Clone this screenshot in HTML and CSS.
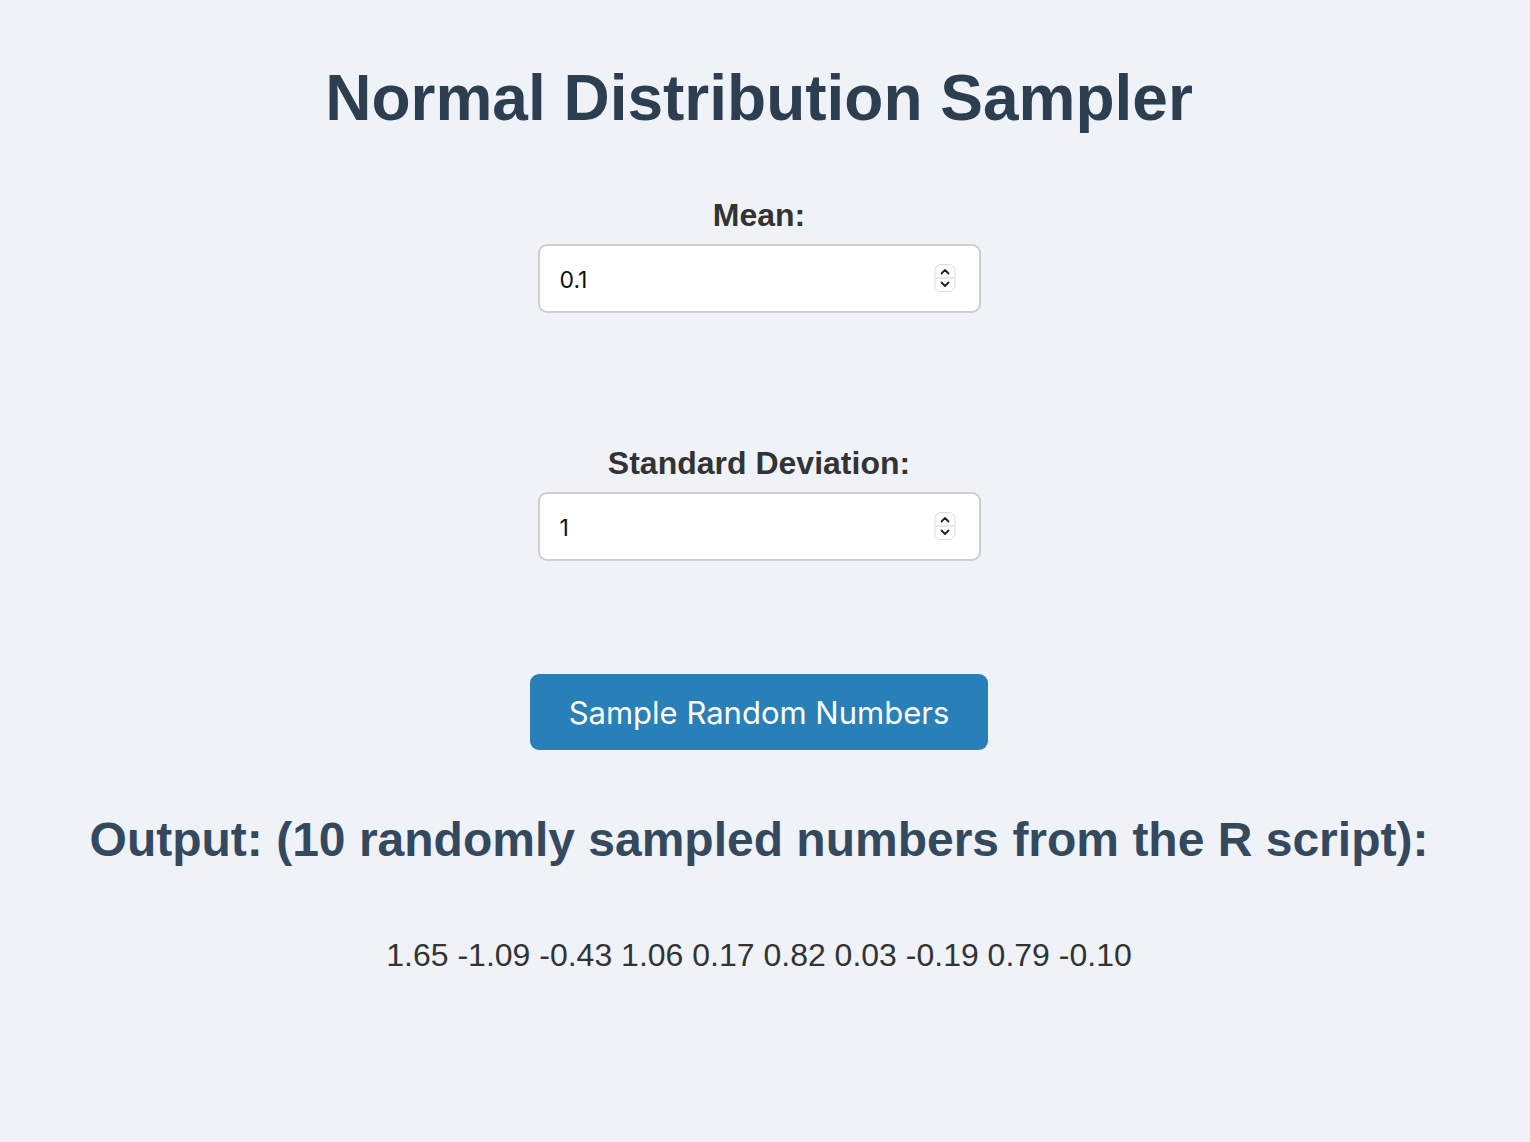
FILE: index.html
```html
<!DOCTYPE html>
<html lang="en">
<head>
<meta charset="utf-8">
<title>Normal Distribution Sampler</title>
<link rel="stylesheet" href="styles.css">
</head>
<body>
<main class="page">
  <h1 class="title">Normal Distribution Sampler</h1>

  <div class="field field-first">
    <label class="field-label" for="mean">Mean:</label>
    <div class="number-box">
      <input class="number-input" id="mean" type="text" value="0.1">
      <svg class="spinner" width="22" height="28" viewBox="0 0 22 28" aria-hidden="true">
        <rect x="1" y="0.5" width="20" height="27" rx="6" ry="6" fill="#fff" stroke="#dadada" stroke-width="1"/>
        <line x1="1.5" y1="14" x2="20.5" y2="14" stroke="#e2e2e2" stroke-width="1.5"/>
        <path d="M7.5 9.5 L11 6 L14.5 9.5" fill="none" stroke="#222" stroke-width="1.8" stroke-linecap="round" stroke-linejoin="round"/>
        <path d="M7.5 18.5 L11 22 L14.5 18.5" fill="none" stroke="#222" stroke-width="1.8" stroke-linecap="round" stroke-linejoin="round"/>
      </svg>
    </div>
  </div>

  <div class="field field-second">
    <label class="field-label" for="sd">Standard Deviation:</label>
    <div class="number-box">
      <input class="number-input" id="sd" type="text" value="1">
      <svg class="spinner" width="22" height="28" viewBox="0 0 22 28" aria-hidden="true">
        <rect x="1" y="0.5" width="20" height="27" rx="6" ry="6" fill="#fff" stroke="#dadada" stroke-width="1"/>
        <line x1="1.5" y1="14" x2="20.5" y2="14" stroke="#e2e2e2" stroke-width="1.5"/>
        <path d="M7.5 9.5 L11 6 L14.5 9.5" fill="none" stroke="#222" stroke-width="1.8" stroke-linecap="round" stroke-linejoin="round"/>
        <path d="M7.5 18.5 L11 22 L14.5 18.5" fill="none" stroke="#222" stroke-width="1.8" stroke-linecap="round" stroke-linejoin="round"/>
      </svg>
    </div>
  </div>

  <button class="sample-btn" type="button">Sample Random Numbers</button>

  <h2 class="output-title">Output: (10 randomly sampled numbers from the R script):</h2>
  <p class="output-values">1.65 -1.09 -0.43 1.06 0.17 0.82 0.03 -0.19 0.79 -0.10</p>
</main>
</body>
</html>
```

FILE: styles.css
```css
* {
  box-sizing: border-box;
}

html, body {
  margin: 0;
  padding: 0;
  background: #eff3f8;
}

body {
  font-family: "Liberation Sans", Arial, Helvetica, sans-serif;
  color: #333;
  min-height: 1142px;
}

.page {
  display: flex;
  flex-direction: column;
  align-items: center;
  text-align: center;
  padding-right: 12px;
}

.title {
  margin: 61px 0 0;
  font-size: 64px;
  line-height: 74px;
  font-weight: 700;
  color: #2c3e50;
}

.field {
  display: flex;
  flex-direction: column;
  align-items: center;
}

.field-first {
  margin-top: 62px;
}

.field-second {
  margin-top: 132px;
}

.field-label {
  font-size: 32px;
  line-height: 37px;
  font-weight: 700;
  color: #333;
  margin-bottom: 10px;
}

.number-box {
  width: 443px;
  height: 69px;
  border: 2px solid #cfcfcf;
  border-radius: 9px;
  background: #fff;
  display: flex;
  align-items: center;
  padding: 0 23px 0 20px;
}

.number-input {
  flex: 1;
  min-width: 0;
  border: 0;
  outline: none;
  background: transparent;
  padding: 2px 0 0;
  font-family: Inter, "Noto Sans", sans-serif;
  font-size: 23px;
  color: #111;
}

.spinner {
  flex: none;
  display: block;
  margin-top: -1px;
}

.sample-btn {
  margin-top: 113px;
  height: 76px;
  padding: 0 39px;
  border: 0;
  border-radius: 9px;
  background: #2980b9;
  color: #fff;
  font-family: Inter, "Noto Sans", sans-serif;
  font-size: 31px;
  cursor: pointer;
}

.output-title {
  margin: 62px 0 0;
  font-size: 48px;
  line-height: 55px;
  font-weight: 700;
  color: #34495e;
}

.output-values {
  margin: 70px 0 0;
  font-size: 32px;
  line-height: 37px;
  color: #333;
}
```
